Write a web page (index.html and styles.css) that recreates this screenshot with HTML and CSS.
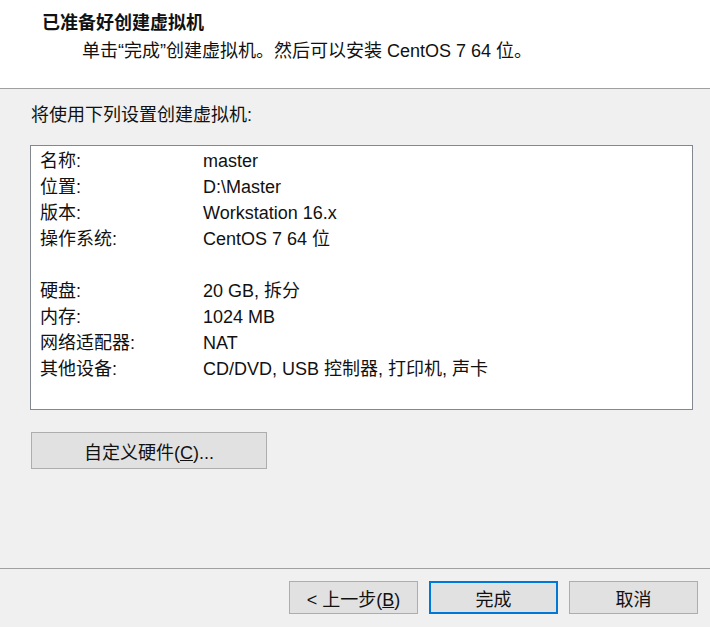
FILE: index.html
```html
<!DOCTYPE html>
<html lang="zh-CN">
<head>
<meta charset="utf-8">
<title>新建虚拟机向导</title>
<link rel="stylesheet" href="styles.css">
</head>
<body>
<div class="dialog">
  <div class="header">
    <div class="title">已准备好创建虚拟机</div>
    <div class="subtitle">单击“完成”创建虚拟机。然后可以安装 CentOS 7 64 位。</div>
  </div>
  <div class="content">
    <div class="intro">将使用下列设置创建虚拟机:</div>
    <div class="summary">
      <div class="row"><span class="label">名称:</span><span class="value">master</span></div>
      <div class="row"><span class="label">位置:</span><span class="value">D:\Master</span></div>
      <div class="row"><span class="label">版本:</span><span class="value">Workstation 16.x</span></div>
      <div class="row"><span class="label">操作系统:</span><span class="value">CentOS 7 64 位</span></div>
      <div class="row blank"></div>
      <div class="row"><span class="label">硬盘:</span><span class="value">20 GB, 拆分</span></div>
      <div class="row"><span class="label">内存:</span><span class="value">1024 MB</span></div>
      <div class="row"><span class="label">网络适配器:</span><span class="value">NAT</span></div>
      <div class="row"><span class="label">其他设备:</span><span class="value">CD/DVD, USB 控制器, 打印机, 声卡</span></div>
    </div>
    <button class="btn custom">自定义硬件(<u>C</u>)...</button>
  </div>
  <div class="footer">
    <button class="btn">&lt; 上一步(<u>B</u>)</button>
    <button class="btn primary">完成</button>
    <button class="btn">取消</button>
  </div>
</div>
</body>
</html>
```

FILE: styles.css
```css
html, body {
  margin: 0;
  padding: 0;
}
body {
  background: #f0f0f0;
  font-family: "Liberation Sans", "Noto Sans CJK SC", sans-serif;
  font-size: 18px;
  color: #111;
}
.dialog {
  width: 710px;
  height: 627px;
  display: flex;
  flex-direction: column;
  overflow: hidden;
}
.header {
  background: #ffffff;
  height: 89px;
  box-sizing: border-box;
  border-bottom: 1px solid #a0a0a0;
  padding: 10px 0 0 42px;
}
.title {
  font-weight: bold;
  font-size: 18px;
  line-height: 26px;
}
.subtitle {
  padding-left: 40px;
  line-height: 26px;
  margin-top: 2px;
}
.content {
  flex: 1;
  padding: 13px 17px 0 31px;
  display: flex;
  flex-direction: column;
  align-items: flex-start;
}
.intro {
  line-height: 26px;
}
.summary {
  margin-top: 17px;
  margin-left: -1px;
  align-self: stretch;
  height: 265px;
  box-sizing: border-box;
  background: #ffffff;
  border: 1px solid #828790;
  padding: 2px 0 0 9px;
}
.row {
  display: flex;
  height: 26px;
  line-height: 26px;
  white-space: nowrap;
}
.label {
  width: 163px;
}
.btn {
  font-family: inherit;
  font-size: 18px;
  color: #111;
  background: #e1e1e1;
  border: 1px solid #adadad;
  border-radius: 0;
  padding: 0;
  margin: 0;
  box-sizing: border-box;
}
.custom {
  margin-top: 22px;
  width: 236px;
  height: 37px;
}
.footer {
  height: 59px;
  box-sizing: border-box;
  border-top: 1px solid #a0a0a0;
  display: flex;
  justify-content: flex-end;
  gap: 11px;
  padding: 12px 12px 0 0;
}
.footer .btn {
  width: 129px;
  height: 33px;
}
.footer .primary {
  border: 2px solid #0078d7;
}
```
